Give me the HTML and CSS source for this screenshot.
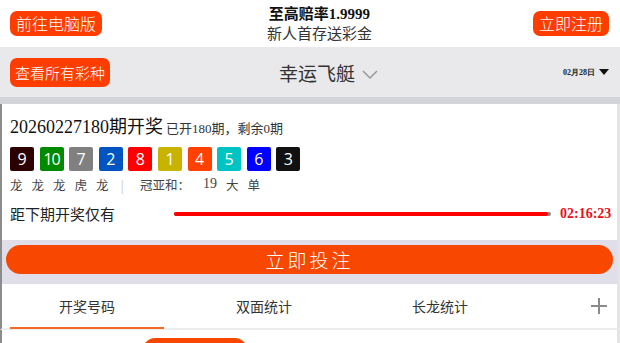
FILE: index.html
```html
<!DOCTYPE html>
<html lang="zh">
  <head>
    <meta charset="utf-8" />
    <title>幸运飞艇</title>
    <link rel="stylesheet" href="styles.css">
  </head>
  <body>
    <header class="top">
      <a class="btn-small" href="#">前往电脑版</a>
      <div class="promo">
        <div class="promo-title">至高赔率1.9999</div>
        <div class="promo-sub">新人首存送彩金</div>
      </div>
      <a class="btn-small" href="#">立即注册</a>
    </header>

    <nav class="navbar">
      <a class="btn-small btn-tall" href="#">查看所有彩种</a>
      <div class="game-name">幸运飞艇
        <svg class="chevron" width="16" height="10" viewBox="0 0 16 10"><path d="M1 1 L8 8 L15 1" fill="none" stroke="#999" stroke-width="1.5"/></svg>
      </div>
      <div class="date">02月28日 <span class="tri"></span></div>
    </nav>

    <section class="draw">
      <div class="draw-title">20260227180期开奖<span class="draw-meta">已开180期，剩余0期</span></div>
      <ul class="balls">
        <li class="ball c9">9</li>
        <li class="ball c10">10</li>
        <li class="ball c7">7</li>
        <li class="ball c2">2</li>
        <li class="ball c8">8</li>
        <li class="ball c1">1</li>
        <li class="ball c4">4</li>
        <li class="ball c5">5</li>
        <li class="ball c6">6</li>
        <li class="ball c3">3</li>
      </ul>
      <div class="result">
        <span>龙</span><span>龙</span><span>龙</span><span>虎</span><span>龙</span>
        <span class="sep">|</span>
        <span class="sum">冠亚和：</span><span class="num">19</span><span>大</span><span>单</span>
      </div>
      <div class="countdown">
        <span class="cd-label">距下期开奖仅有</span>
        <div class="cd-bar"><div class="cd-fill"></div></div>
        <span class="cd-time">02:16:23</span>
      </div>
    </section>

    <div class="bet-wrap">
      <a class="bet" href="#">立即投注</a>
    </div>

    <section class="tabs">
      <div class="tab active">开奖号码</div>
      <div class="tab">双面统计</div>
      <div class="tab">长龙统计</div>
      <div class="tab-plus">
        <svg width="16" height="16" viewBox="0 0 16 16"><path d="M8 0 V16 M0 8 H16" stroke="#8a8a8a" stroke-width="2"/></svg>
      </div>
    </section>
    <div class="below">
      <span class="below-btn"></span>
    </div>
  </body>
</html>
```

FILE: styles.css
```css
body {
  margin: 0;
  font-family: "Noto Sans CJK SC", "Noto Sans", sans-serif;
  background: #fff;
  color: #333;
  width: 620px;
  height: 343px;
  overflow: hidden;
}

a {
  text-decoration: none;
}

.top {
  height: 47px;
  display: flex;
  align-items: center;
  justify-content: space-between;
  padding: 0 11px 0 10px;
  background: #fff;
}

.btn-small {
  display: inline-block;
  background: #ff3d00;
  color: #fff;
  font-size: 16px;
  line-height: 25px;
  height: 25px;
  padding: 0 6px;
  border-radius: 7px;
  font-weight: 300;
}

.promo {
  text-align: center;
  margin-left: 4px;
}

.promo-title {
  font-family: "Liberation Serif", "Noto Sans CJK SC", serif;
  font-weight: bold;
  font-size: 15px;
  line-height: 18px;
  color: #111;
}

.promo-sub {
  font-size: 15px;
  line-height: 20px;
  color: #333;
}

.navbar {
  height: 50px;
  background: #e9e9eb;
  display: flex;
  align-items: center;
  padding: 0 11px 0 10px;
  border-bottom: 7px solid #d3d3da;
}

.btn-tall {
  height: 29px;
  line-height: 29px;
  font-size: 15px;
  border-radius: 7px;
  padding: 0 5px;
}

.game-name {
  flex: 1;
  text-align: center;
  font-size: 19px;
  color: #333;
  margin-left: -16px;
}

.chevron {
  vertical-align: middle;
  margin-left: 3px;
}

.date {
  font-family: "Liberation Serif", serif;
  font-weight: bold;
  font-size: 8px;
  color: #222;
  display: flex;
  align-items: center;
}

.tri {
  display: inline-block;
  margin-left: 4px;
  width: 0;
  height: 0;
  border-left: 5px solid transparent;
  border-right: 5px solid transparent;
  border-top: 6px solid #111;
}

.draw,
.tabs,
.below,
.bet-wrap {
  border-left: 2px solid #8c8c8c;
  border-right: 3px solid #e4e4e4;
}

.draw {
  padding: 11px 0 0 8px;
  height: 136px;
  box-sizing: border-box;
}

.draw-title {
  font-family: "Liberation Serif", "Noto Sans CJK SC", serif;
  font-size: 18px;
  color: #111;
  line-height: 24px;
}

.draw-meta {
  font-size: 13px;
  color: #333;
  margin-left: 3px;
}

.balls {
  list-style: none;
  padding: 0;
  margin: 6px 0 0;
  display: flex;
  gap: 5.6px;
}

.ball {
  width: 24px;
  height: 24px;
  line-height: 24px;
  text-align: center;
  color: #fff;
  font-family: "Open Sans", sans-serif;
  font-size: 16px;
  border-radius: 2px;
}

.c9 { background: #2c0000; }
.c10 { background: #008a00; letter-spacing: -1px; }
.c7 { background: #808080; }
.c2 { background: #0055c0; }
.c8 { background: #ff0000; }
.c1 { background: #c8b400; }
.c4 { background: #ff4000; }
.c5 { background: #00c3c3; }
.c6 { background: #0000ff; }
.c3 { background: #111; }

.result {
  margin-top: 4px;
  font-size: 12.5px;
  color: #444;
  display: flex;
  gap: 9px;
  height: 18px;
  align-items: center;
}

.sep {
  color: #ccc;
  margin: 0 7px 0 3px;
}

.sum {
  margin-right: 4px;
}

.num {
  font-family: "Liberation Serif", serif;
  font-size: 14px;
}

.countdown {
  display: flex;
  align-items: center;
  margin-top: 10px;
}

.cd-label {
  font-size: 15px;
  color: #222;
  width: 164px;
}

.cd-bar {
  width: 377px;
  height: 4px;
  background: #888;
  border-radius: 2px;
}

.cd-fill {
  width: 374px;
  height: 4px;
  background: #ff0000;
  border-radius: 2px;
}

.cd-time {
  font-family: "Liberation Serif", serif;
  font-weight: bold;
  color: #e8101a;
  font-size: 14px;
  margin-left: 9px;
}

.bet-wrap {
  background: #dfdee9;
  padding: 5px 4px 10px 4px;
}

.bet {
  display: block;
  background: #f74700;
  color: #fff;
  text-align: center;
  height: 29px;
  line-height: 29px;
  border-radius: 15px;
  font-size: 19px;
  letter-spacing: 3px;
  font-weight: 300;
}

.tabs {
  display: flex;
  align-items: center;
  height: 44px;
  border-bottom: 2px solid #ececec;
}

.tab {
  width: 176px;
  text-align: center;
  font-size: 14px;
  color: #333;
  line-height: 42px;
}

.tab.active {
  margin-left: 8px;
  width: 154px;
  border-bottom: 2px solid #f26a28;
  margin-bottom: -2px;
  margin-right: 12px;
}

.tab-plus {
  flex: 1;
  display: flex;
  justify-content: flex-end;
  padding-right: 10px;
}

.below {
  height: 14px;
  overflow: hidden;
  padding-left: 141px;
  padding-top: 8px;
}

.below-btn {
  display: block;
  width: 104px;
  height: 24px;
  background: #f74700;
  border-radius: 12px;
}
```
